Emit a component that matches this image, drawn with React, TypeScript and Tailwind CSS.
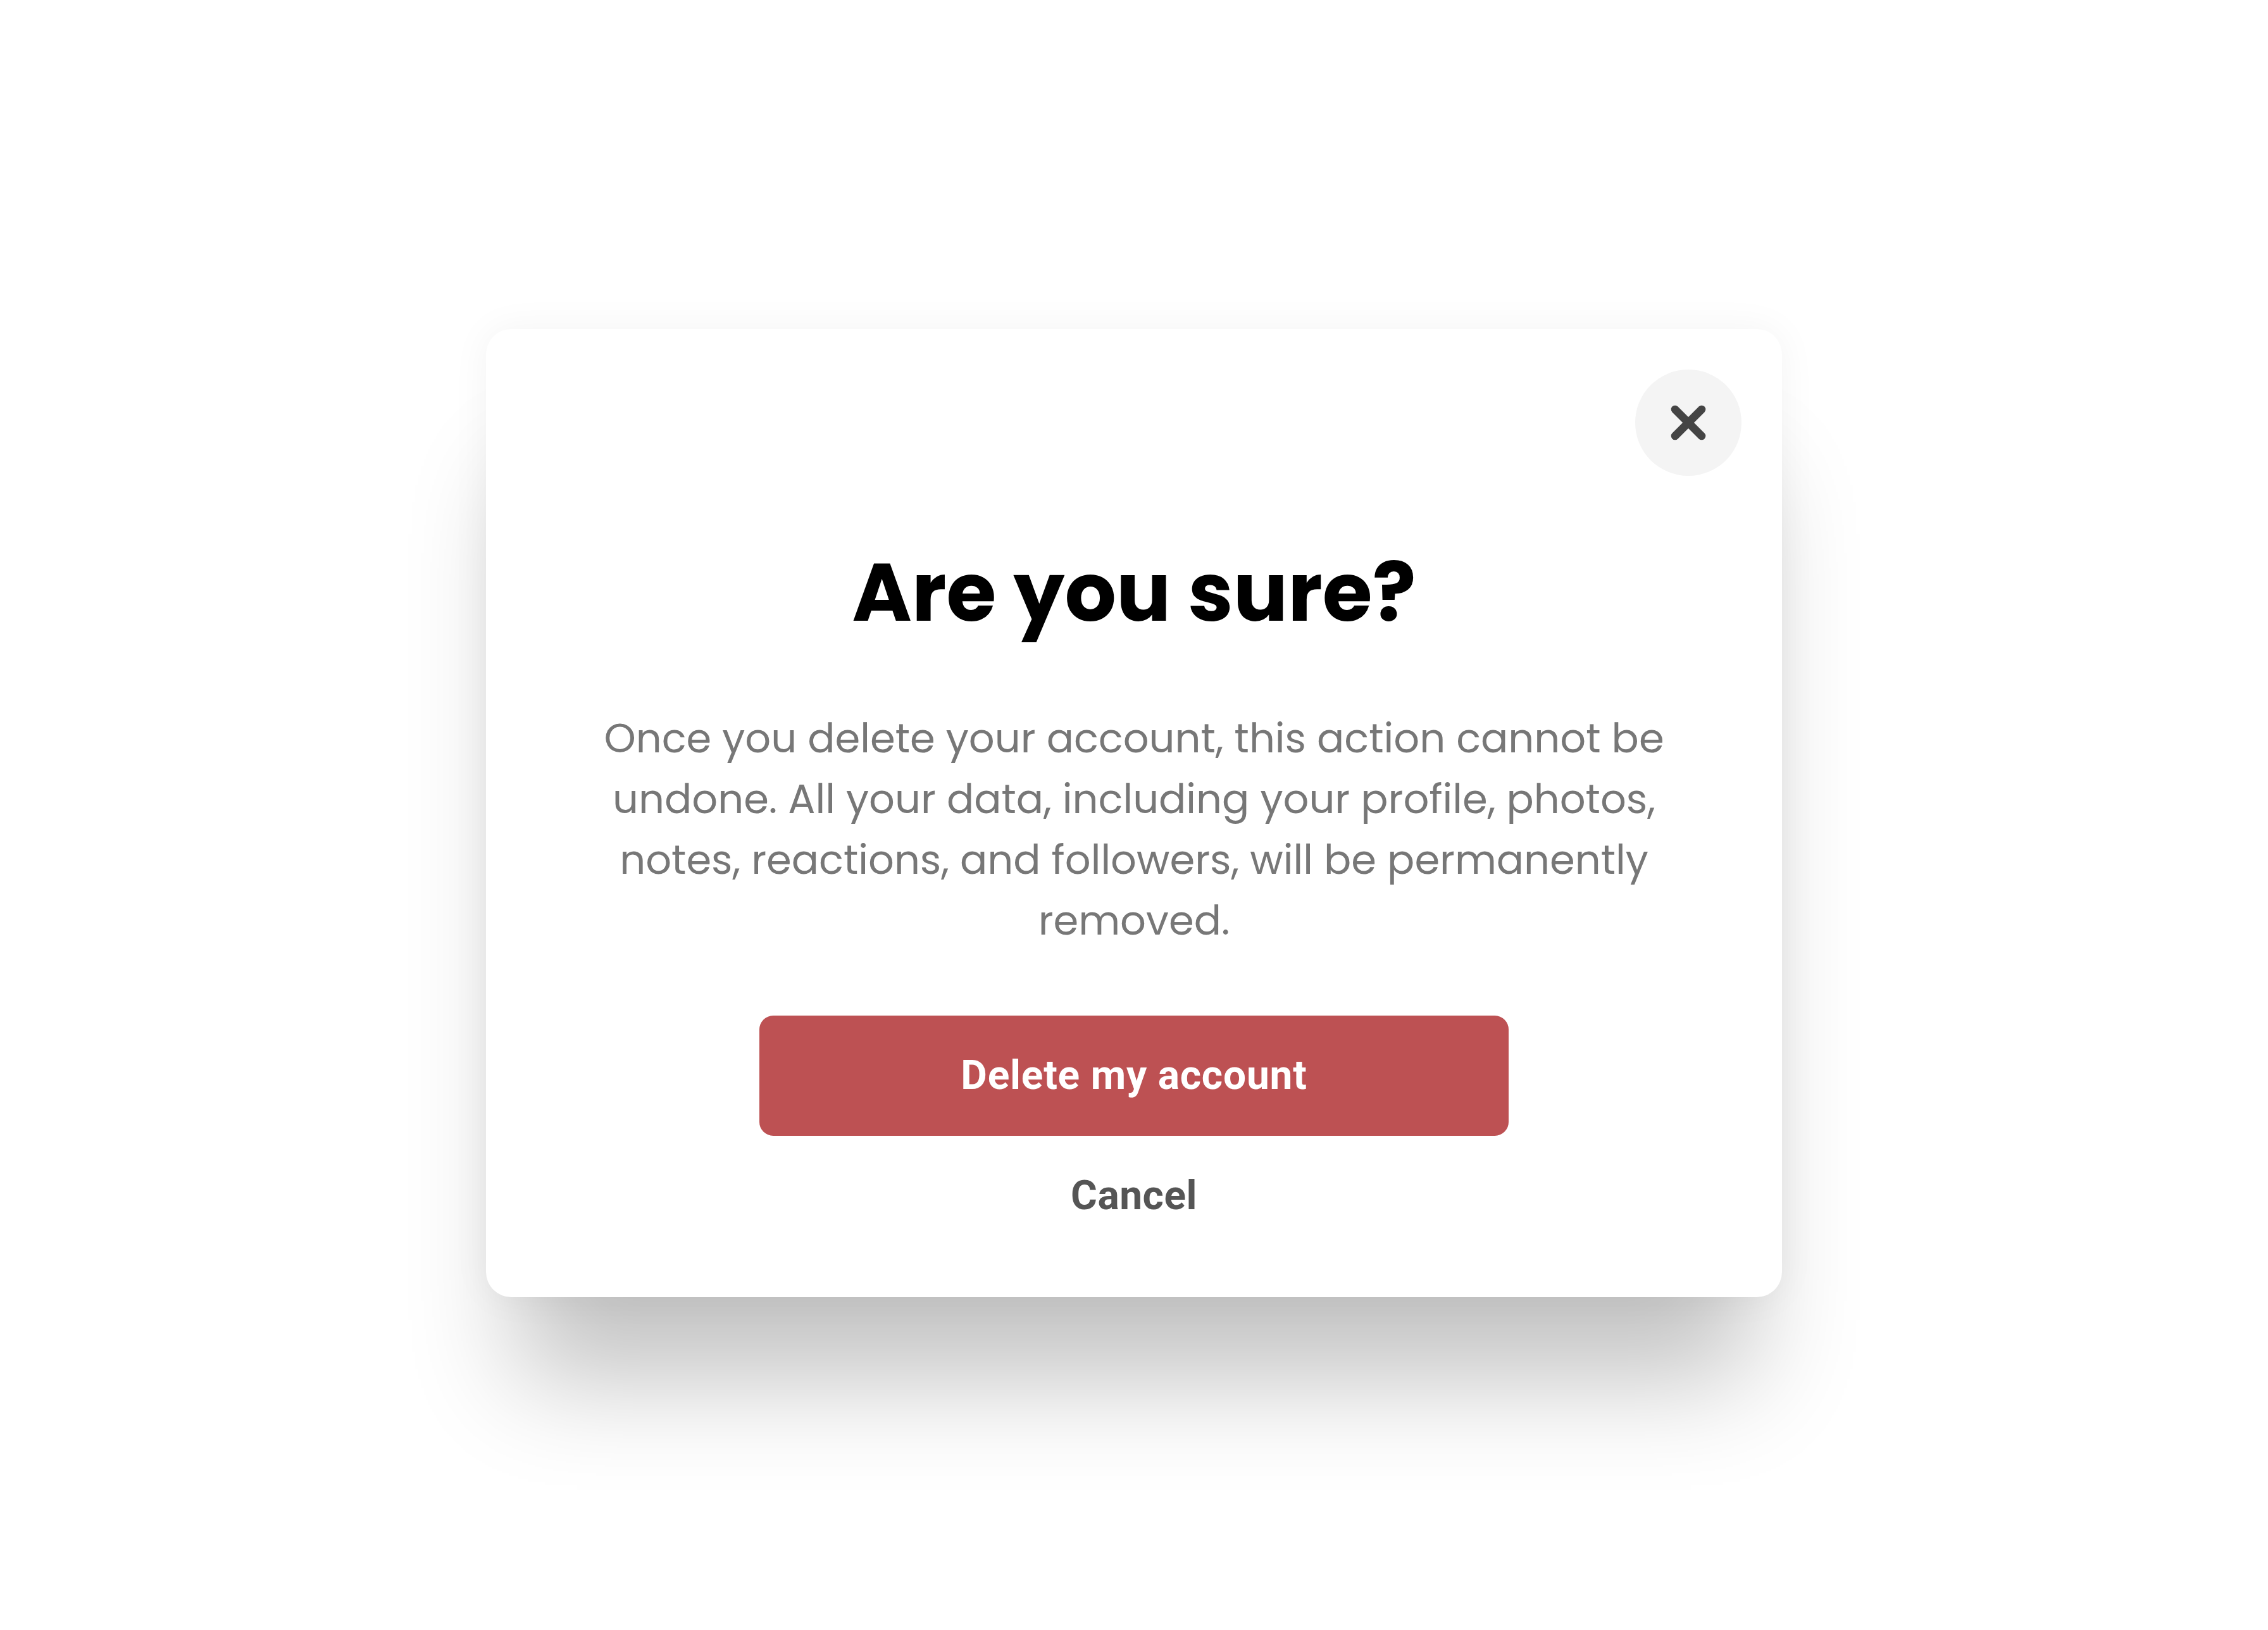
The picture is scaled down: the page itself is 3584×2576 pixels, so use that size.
import { X } from "lucide-react";

export default function App() {
  return (
    <div className="min-h-screen w-full bg-white flex justify-center pt-[520px]">
      <div className="relative w-[2048px] h-[1530px] bg-white rounded-[40px] shadow-[0_0_60px_rgba(0,0,0,0.05),0_180px_160px_-50px_rgba(0,0,0,0.24)] flex flex-col items-center pt-[340px]">
        <button className="absolute top-[64px] right-[64px] w-[168px] h-[168px] rounded-full bg-[#f4f4f4] flex items-center justify-center">
          <X className="w-[84px] h-[84px] text-[#444444]" strokeWidth={3.6} />
        </button>

        <h1
          className="text-[128px] leading-[1.2] font-bold text-black"
          style={{ fontFamily: "Poppins, Inter, 'Open Sans', sans-serif" }}
        >
          Are you sure?
        </h1>

        <p
          className="mt-[105px] w-[1760px] text-center text-[64px] leading-[96px] text-[#777777]"
          style={{ fontFamily: "Poppins, 'Open Sans', sans-serif" }}
        >
          Once you delete your account, this action cannot be undone. All your data, including your profile, photos,
          notes, reactions, and followers, will be permanently removed.
        </p>

        <button
          className="mt-[102px] w-[1184px] h-[190px] rounded-[22px] bg-[#bd5153] text-white text-[64px] font-bold tracking-[0.8px]"
          style={{ fontFamily: "Roboto, 'Liberation Sans', sans-serif" }}
        >
          Delete my account
        </button>

        <button
          className="mt-[47px] text-[64px] leading-[96px] font-bold text-[#555555] tracking-[0.5px]"
          style={{ fontFamily: "Roboto, 'Liberation Sans', sans-serif" }}
        >
          Cancel
        </button>
      </div>
    </div>
  );
}
